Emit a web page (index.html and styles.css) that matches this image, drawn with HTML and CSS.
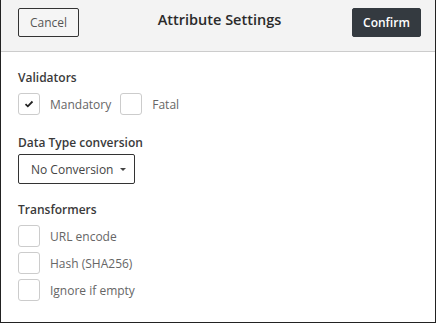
FILE: index.html
```html
<!DOCTYPE html>
<html lang="en">
<head>
    <meta charset="UTF-8">
    <meta name="viewport" content="width=device-width, initial-scale=1.0">
    <title>Attribute Settings</title>
    <link rel="stylesheet" href="styles.css">
</head>
<body>

    <div class="settings-dialog">
        <div class="dialog-header">
            <button class="btn btn-cancel">Cancel</button>
            <h2>Attribute Settings</h2>
            <button class="btn btn-confirm">Confirm</button>
        </div>

        <div class="dialog-body">
            <div class="section">
                <p class="section-label">Validators</p>
                <div class="check-row inline">
                    <label class="check-item">
                        <span class="check-box checked">
                            <svg width="10" height="8" viewBox="0 0 10 8"><path d="M1.5 4.2 L3.8 6.3 L8.5 1.5" fill="none" stroke="#222" stroke-width="1.8"/></svg>
                        </span>
                        <span class="check-text">Mandatory</span>
                    </label>
                    <label class="check-item">
                        <span class="check-box"></span>
                        <span class="check-text">Fatal</span>
                    </label>
                </div>
            </div>

            <div class="section">
                <p class="section-label">Data Type conversion</p>
                <button class="select-btn">No Conversion <span class="caret"></span></button>
            </div>

            <div class="section">
                <p class="section-label">Transformers</p>
                <div class="check-row stacked">
                    <label class="check-item">
                        <span class="check-box"></span>
                        <span class="check-text">URL encode</span>
                    </label>
                    <label class="check-item">
                        <span class="check-box"></span>
                        <span class="check-text">Hash (SHA256)</span>
                    </label>
                    <label class="check-item">
                        <span class="check-box"></span>
                        <span class="check-text">Ignore if empty</span>
                    </label>
                </div>
            </div>
        </div>
    </div>

</body>
</html>
```

FILE: styles.css
```css
body {
    margin: 0;
    font-family: 'Open Sans', 'Noto Sans', sans-serif;
    background-color: #ffffff;
}

.settings-dialog {
    width: 436px;
    height: 323px;
    box-sizing: border-box;
    border: 1px solid #222;
    border-top: none;
    background-color: #fff;
}

.dialog-header {
    display: grid;
    grid-template-columns: 1fr auto 1fr;
    align-items: start;
    padding: 8px 14px 14px 17px;
    background-color: #f3f3f3;
    border-bottom: 1px solid #ccc;
}

.dialog-header h2 {
    margin: 0;
    font-size: 14.5px;
    font-weight: 600;
    color: #2a2a2a;
    line-height: 24px;
}

.btn {
    height: 29px;
    font-family: inherit;
    font-size: 12px;
    border-radius: 2px;
    cursor: pointer;
}

.btn-cancel {
    justify-self: start;
    width: 61px;
    background-color: #f5f5f5;
    border: 1px solid #333;
    color: #555;
}

.btn-confirm {
    justify-self: end;
    width: 69px;
    background-color: #343a40;
    border: 1px solid #343a40;
    color: #fff;
    font-weight: 600;
}

.dialog-body {
    padding: 18px 17px 0;
}

.section {
    margin-bottom: 20px;
}

.section-label {
    margin: 0 0 7px;
    font-size: 12px;
    line-height: 16px;
    font-weight: 600;
    color: #3a3a3a;
}

.check-row.inline {
    display: flex;
    gap: 9px;
}

.check-row.stacked {
    display: flex;
    flex-direction: column;
    gap: 5px;
}

.check-item {
    display: flex;
    align-items: center;
    gap: 10px;
}

.check-box {
    width: 22px;
    height: 22px;
    box-sizing: border-box;
    border: 1px solid #ccc;
    border-radius: 3px;
    display: flex;
    align-items: center;
    justify-content: center;
}

.check-text {
    font-size: 12px;
    color: #666;
}

.select-btn {
    margin: -4px 0 -2px;
    width: 117px;
    height: 30px;
    padding: 0 12px;
    background-color: #fff;
    border: 1px solid #333;
    border-radius: 2px;
    font-family: inherit;
    font-size: 12px;
    color: #444;
    white-space: nowrap;
    display: flex;
    align-items: center;
    gap: 7px;
}

.caret {
    width: 0;
    height: 0;
    border-left: 3px solid transparent;
    border-right: 3px solid transparent;
    border-top: 3px solid #444;
}
```
